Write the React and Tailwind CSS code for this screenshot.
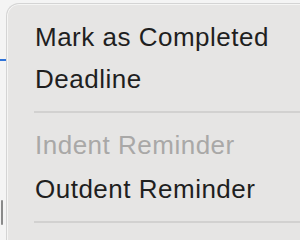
export default function App() {
  const rows = [
    { label: 'Mark as Completed', h: 'h-[42px] leading-[42px]' },
    { label: 'Deadline', h: 'h-[43px] leading-[43px]' },
    { sep: true },
    { label: 'Indent Reminder', disabled: true, h: 'h-[44px] leading-[44px]' },
    { label: 'Outdent Reminder', h: 'h-[44px] leading-[44px]' },
    { sep: true },
  ];

  return (
    <div
      className="relative w-[300px] h-[240px] overflow-hidden bg-[#f4f4f4]"
      style={{ fontFamily: '"Liberation Sans", Arial, sans-serif' }}
    >
      {/* bits of the window behind the menu */}
      <div className="absolute left-0 top-[59px] w-[6px] h-[2px] bg-[#2f73d9]" />
      <div className="absolute left-[1px] top-[200px] w-[2px] h-[25px] rounded-full bg-[#8a8a8a]" />

      <div className="absolute left-[6px] top-[3px] w-[320px] h-[260px] rounded-tl-[13px] border-l border-t border-[#d4d4d4] bg-[#e6e5e4] pt-[12px] shadow-[0_0_0_1px_rgba(255,255,255,0.6)_inset]">
        {rows.map((row, i) =>
          row.sep ? (
            <div key={i} className="pl-[27px] py-[10px]">
              <div className="h-[2px] bg-[#d2d1d0]" />
            </div>
          ) : (
            <div
              key={i}
              className={`pl-[28px] text-[26px] tracking-[0.5px] ${row.h} ${
                row.disabled ? 'text-[#a9a8a7]' : 'text-[#1f1f1f]'
              }`}
            >
              {row.label}
            </div>
          )
        )}
      </div>
    </div>
  );
}
